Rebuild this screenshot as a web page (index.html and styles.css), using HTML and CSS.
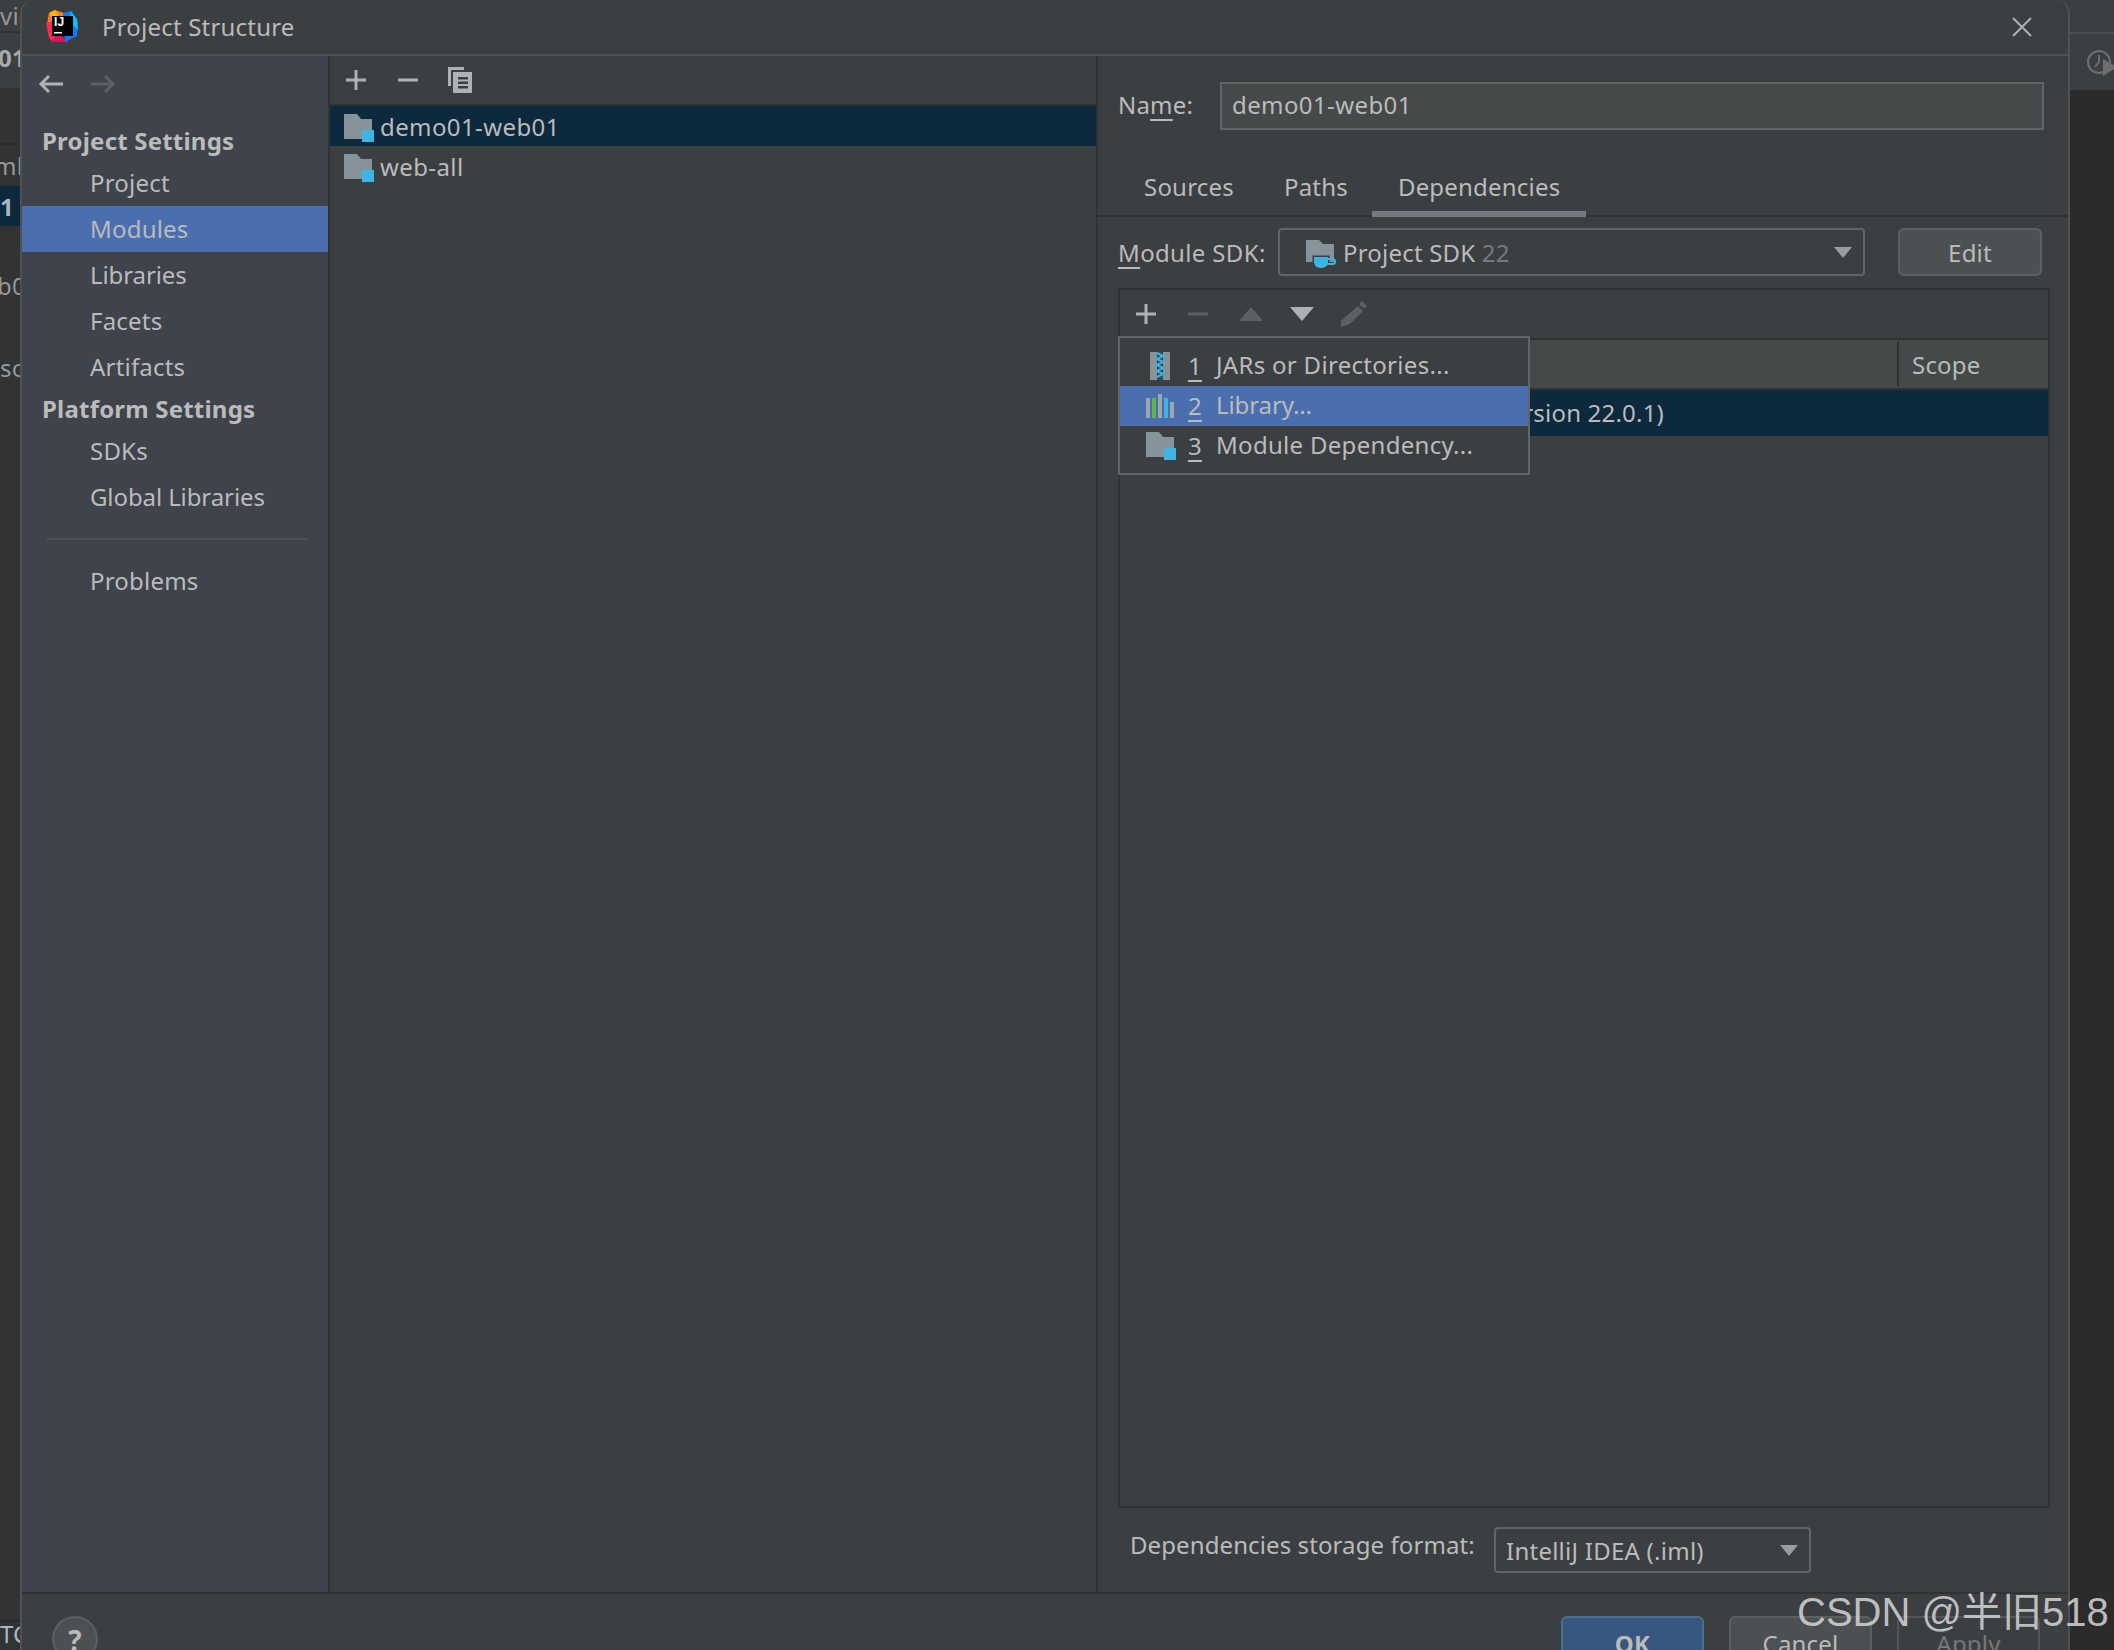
FILE: index.html

```html
<!DOCTYPE html>
<html lang="en">
<head>
  <meta charset="UTF-8">
  <title>Project Structure</title>
  <link rel="stylesheet" href="styles.css">
</head>
<body>

  <svg class="defs" width="0" height="0">
    <symbol id="module" viewBox="0 0 30 28">
      <path d="M0 0h13l4 5h11v20H0z" fill="#87939a"/>
      <rect x="18" y="16" width="12" height="12" fill="#3db4e4"/>
    </symbol>
    <symbol id="plus" viewBox="0 0 20 20">
      <path d="M8.500 0h3v8.500H20v3h-8.500V20h-3v-8.500H0v-3h8.500z"/>
    </symbol>
    <symbol id="minus" viewBox="0 0 20 20">
      <rect x="0" y="8.500" width="20" height="3"/>
    </symbol>
  </svg>

  <div class="desktop">
    <div class="ide-left">
      <div class="peek peek-a">vice</div>
      <div class="peek peek-b">01</div>
      <div class="peek peek-c"></div>
      <div class="peek peek-d">ml</div>
      <div class="peek peek-sel">1</div>
      <div class="peek peek-e">b0</div>
      <div class="peek peek-f">so</div>
      <div class="peek-fill"></div>
      <div class="peek peek-g">TC</div>
    </div>

    <div class="dialog">
      <div class="titlebar">
        <svg class="logo" viewBox="0 0 32 32" width="32" height="32">
          <polygon points="3,3 9,0 18,3 14,14 1,14" fill="#fe7a1b"/>
          <polygon points="3,3 9,0 13,5 6,8" fill="#fdb60d"/>
          <polygon points="0,13 7,11 10,24 7,32 3,28" fill="#fe2857"/>
          <polygon points="5,31 12,24 23,32 12,32" fill="#dd1265"/>
          <polygon points="17,3 26,1 32,12 31,26 19,32 18,12" fill="#087cfa"/>
          <polygon points="24,1 31,9 32,20 26,14" fill="#07c3f2"/>
          <rect x="6" y="6" width="21" height="20" fill="#000"/>
          <text class="logo-text" x="8" y="16">IJ</text>
          <rect x="8" y="22" width="8" height="1.500" fill="#fff"/>
        </svg>
        <span class="title">Project Structure</span>
        <svg class="close" viewBox="0 0 20 20" width="20" height="20">
          <path d="M1 1l18 18M19 1L1 19"/>
        </svg>
      </div>

      <div class="main">
        <nav class="sidebar">
          <div class="history">
            <svg class="arrow-icon" viewBox="0 0 26 20" width="26" height="20"><path d="M25 10H3M11 2l-8 8 8 8"/></svg>
            <svg class="arrow-icon off" viewBox="0 0 26 20" width="26" height="20"><path d="M1 10h22M15 2l8 8-8 8"/></svg>
          </div>
          <div class="heading">Project Settings</div>
          <div class="item">Project</div>
          <div class="item active">Modules</div>
          <div class="item tight">Libraries</div>
          <div class="item">Facets</div>
          <div class="item">Artifacts</div>
          <div class="heading">Platform Settings</div>
          <div class="item">SDKs</div>
          <div class="item tight">Global Libraries</div>
          <div class="side-sep"></div>
          <div class="item">Problems</div>
        </nav>

        <section class="modules">
          <div class="mod-toolbar">
            <svg class="tool" width="20" height="20"><use href="#plus"/></svg>
            <svg class="tool" width="20" height="20"><use href="#minus"/></svg>
            <svg class="tool" viewBox="0 0 24 26" width="24" height="26">
              <path d="M0 0h16v3H3v16H0z"/>
              <path fill-rule="evenodd" d="M5 5h19v21H5zM10 10v2.500h10V10zM10 14.500V17h10v-2.500zM10 19v2.500h10V19z"/>
            </svg>
          </div>
          <div class="mod-row selected">
            <svg class="mod-icon" width="30" height="28"><use href="#module"/></svg>
            <span>demo01-web01</span>
          </div>
          <div class="mod-row">
            <svg class="mod-icon" width="30" height="28"><use href="#module"/></svg>
            <span>web-all</span>
          </div>
        </section>

        <section class="detail">
          <div class="name-row">
            <label class="name-label">Na<u>m</u>e:</label>
            <div class="name-input">demo01-web01</div>
          </div>

          <div class="tabs">
            <div class="tab">Sources</div>
            <div class="tab paths">Paths</div>
            <div class="tab current">Dependencies</div>
          </div>

          <div class="sdk-row">
            <label class="sdk-label"><u>M</u>odule SDK:</label>
            <div class="combo sdk-combo">
              <svg class="sdk-icon" viewBox="0 0 30 30" width="30" height="30">
                <path d="M0 0h13l4 4h11v18H0z" fill="#87939a"/>
                <path d="M8 17h14v4c0 5-3 7-7 7s-7-2-7-7z" fill="#3db4e4" stroke="#3c3f41" stroke-width="3" paint-order="stroke"/>
                <path d="M22 19h4.500a2.500 2.500 0 010 5H21" fill="none" stroke="#3db4e4" stroke-width="2"/>
              </svg>
              <span>Project SDK <span class="muted">22</span></span>
              <i class="caret"></i>
            </div>
            <button class="btn edit-btn">Edit</button>
          </div>

          <div class="deps">
            <div class="deps-toolbar">
              <svg class="tool" width="20" height="20"><use href="#plus"/></svg>
              <svg class="tool off" width="20" height="20"><use href="#minus"/></svg>
              <svg class="tool off" viewBox="0 0 24 14" width="24" height="14"><path d="M12 0l12 14H0z"/></svg>
              <svg class="tool" viewBox="0 0 24 14" width="24" height="14"><path d="M0 0h24L12 14z"/></svg>
              <svg class="tool off" viewBox="0 0 26 26" width="26" height="26">
                <path d="M19 2l2-2 5 5-2 2a1.500 1.500 0 01-2 0l-3-3a1.500 1.500 0 010-2zM17 5l5 5-13 13-9 3v-6z"/>
              </svg>
            </div>
            <div class="deps-header">
              <div class="col-main"></div>
              <div class="col-scope">Scope</div>
            </div>
            <div class="deps-row">
              <div class="cell-jdk">22 (version 22.0.1)</div>
            </div>

            <div class="popup">
              <div class="pop-item">
                <svg class="pop-icon" viewBox="0 0 30 28" width="30" height="28">
                  <rect x="4" y="0" width="20" height="28" fill="#87939a"/>
                  <rect x="11" y="0" width="6" height="28" fill="#2f4a59"/>
                  <path d="M11 1l6 3-6 3 6 3-6 3 6 3-6 3 6 3-6 3" fill="none" stroke="#3db4e4" stroke-width="2"/>
                </svg>
                <u class="key">1</u>
                <span>JARs or Directories...</span>
              </div>
              <div class="pop-item on">
                <svg class="pop-icon" viewBox="0 0 30 28" width="30" height="28">
                  <rect x="0" y="6" width="4" height="20" fill="#9aa7b0"/>
                  <rect x="6" y="6" width="4" height="20" fill="#62b543"/>
                  <rect x="12" y="2" width="4" height="24" fill="#9aa7b0"/>
                  <rect x="18" y="6" width="4" height="20" fill="#3db4e4"/>
                  <rect x="24" y="10" width="4" height="16" fill="#9aa7b0"/>
                </svg>
                <u class="key">2</u>
                <span class="tight">Library...</span>
              </div>
              <div class="pop-item">
                <svg class="pop-icon" width="30" height="28"><use href="#module"/></svg>
                <u class="key">3</u>
                <span>Module Dependency...</span>
              </div>
            </div>
          </div>

          <div class="format-row">
            <label class="format-label">Dependencies storage format:</label>
            <div class="combo format-combo">
              <span>IntelliJ IDEA (.iml)</span>
              <i class="caret"></i>
            </div>
          </div>
        </section>
      </div>

      <div class="footer">
        <div class="help">?</div>
        <div class="actions">
          <button class="btn primary">OK</button>
          <button class="btn">Cancel</button>
          <button class="btn disabled">Apply</button>
        </div>
      </div>
    </div>

    <div class="ide-right">
      <div class="right-tab"></div>
      <div class="right-bar">
        <svg viewBox="0 0 30 30" width="30" height="30">
          <circle cx="12" cy="13" r="11" fill="none" stroke="#6e6e6e" stroke-width="2"/>
          <path d="M12 6v7l-4 5" fill="none" stroke="#6e6e6e" stroke-width="2"/>
          <path d="M16 10l14 8-14 9z" fill="#6e6e6e"/>
        </svg>
      </div>
    </div>
  </div>

  <div class="watermark">CSDN @半旧518</div>

</body>
</html>
```

FILE: styles.css

```css
* {
  box-sizing: border-box;
}
html, body {
  margin: 0;
  height: 100%;
}
body {
  position: relative;
  width: 2114px;
  height: 1650px;
  overflow: hidden;
  background: #2b2b2b;
  color: #bbbbbb;
  font-family: "Noto Sans", "Open Sans", sans-serif;
  font-size: 24px;
  letter-spacing: 0.2px;
}
.defs {
  position: absolute;
}
u {
  text-decoration-thickness: 2px;
  text-underline-offset: 5px;
}
svg {
  display: block;
  flex: none;
}
.tight {
  letter-spacing: -0.1px;
}
.desktop {
  display: flex;
  height: 1650px;
}

/* IDE window peeking out behind the dialog, wider than the gap so the
   dialog's rounded corners show it */
.ide-left {
  width: 34px;
  margin-right: -14px;
  flex: none;
  display: flex;
  flex-direction: column;
  background: #313335;
  overflow: hidden;
}
.peek {
  white-space: nowrap;
  display: flex;
  align-items: center;
  flex: none;
  color: #a9b7c6;
}
.peek-a { height: 33px; background: #3c3f41; border-bottom: 2px solid #323232; color: #999; }
.peek-b { height: 57px; background: #3c3f41; border-bottom: 2px solid #323232; padding-bottom: 6px; text-indent: -2px; color: #aaa; font-weight: 700; }
.peek-c { height: 55px; border-bottom: 2px solid #2b2b2b; }
.peek-d { height: 41px; color: #999; text-indent: -6px; }
.peek-sel { height: 40px; background: #0d293e; font-weight: 700; }
.peek-e { height: 118px; color: #999; text-indent: -3px; }
.peek-f { height: 46px; color: #999; }
.peek-fill { flex: 1; border-bottom: 2px solid #2b2b2b; }
.peek-g { height: 28px; align-items: flex-end; }
.ide-right {
  width: 58px;
  margin-left: -14px;
  flex: none;
  display: flex;
  flex-direction: column;
}
.right-tab {
  height: 34px;
  background: #3c3f41;
  border-bottom: 2px solid #4c4f51;
}
.right-bar {
  height: 56px;
  background: #3c3f41;
  padding: 15px 0 0 31px;
}

/* dialog */
.dialog {
  position: relative;
  width: 2050px;
  height: 1650px;
  flex: none;
  display: flex;
  flex-direction: column;
  background: #3c3f41;
  border: 2px solid #4f5254;
  border-width: 0 2px;
  border-radius: 14px 14px 0 0;
  overflow: hidden;
}
.titlebar {
  height: 56px;
  flex: none;
  display: flex;
  align-items: center;
  padding-left: 24px;
  border-bottom: 2px solid #4f5254;
}
.logo {
  margin-right: 24px;
  margin-top: -2px;
}
.logo-text {
  font: 700 12px "Liberation Sans", sans-serif;
  fill: #fff;
}
.title {
  flex: 1;
  line-height: 54px;
}
.close {
  margin-right: 36px;
  stroke: #afb1b3;
  stroke-width: 2;
  fill: none;
}
.main {
  flex: 1;
  min-height: 0;
  display: flex;
  border-bottom: 2px solid #323232;
}

/* left settings tree */
.sidebar {
  width: 308px;
  flex: none;
  background: #3f434c;
  border-right: 2px solid #323232;
}
.history {
  height: 66px;
  display: flex;
  gap: 26px;
  padding: 18px 0 0 16px;
}
.arrow-icon {
  fill: none;
  stroke: #afb1b3;
  stroke-width: 3;
}
.arrow-icon.off {
  stroke: #5d5f61;
}
.heading {
  height: 38px;
  line-height: 38px;
  padding-left: 20px;
  font-weight: 700;
}
.item {
  height: 46px;
  line-height: 46px;
  padding-left: 68px;
}
.item.active {
  background: #4b6eaf;
}
.side-sep {
  height: 38px;
  margin: 0 20px 0 24px;
  background: linear-gradient(#4b4e55, #4b4e55) center / 100% 2px no-repeat;
}

/* module list */
.modules {
  width: 768px;
  flex: none;
  border-right: 2px solid #323232;
}
.mod-toolbar {
  height: 50px;
  display: flex;
  align-items: center;
  padding-left: 16px;
  border-bottom: 2px solid #323232;
}
.tool {
  fill: #afb1b3;
}
.tool.off {
  fill: #5d5f61;
}
.mod-toolbar .tool:nth-child(1) { margin: 0 32px 0 0; }
.mod-toolbar .tool:nth-child(2) { margin: 0 30px 0 0; }
.mod-row {
  height: 40px;
  display: flex;
  align-items: center;
  padding-left: 14px;
  gap: 6px;
  letter-spacing: 0.4px;
}
.mod-icon {
  margin-top: 4px;
}
.mod-row.selected {
  background: #0d293e;
}

/* right side */
.detail {
  flex: 1;
  min-width: 0;
  display: flex;
  flex-direction: column;
}
.name-row {
  height: 48px;
  flex: none;
  margin: 26px 24px 0 20px;
  display: flex;
  align-items: center;
}
.name-label {
  width: 102px;
  margin-top: -4px;
}
.name-input {
  flex: 1;
  height: 48px;
  line-height: 42px;
  padding-left: 10px;
  letter-spacing: 0.4px;
  background: #45494a;
  border: 2px solid #646464;
}
.tabs {
  height: 87px;
  flex: none;
  display: flex;
  align-items: stretch;
  padding-left: 20px;
  padding-top: 30px;
  border-bottom: 2px solid #323232;
}
.tab {
  padding: 0 26px;
  line-height: 54px;
}
.tab.paths {
  margin-left: -2px;
}
.tab.current {
  border-bottom: 6px solid #747a80;
  margin-bottom: -2px;
  margin-left: -2px;
}
.sdk-row {
  height: 48px;
  flex: none;
  margin: 11px 24px 0 20px;
  display: flex;
  align-items: center;
}
.sdk-label {
  width: 160px;
  letter-spacing: 0.35px;
}
.combo {
  height: 48px;
  flex: none;
  display: flex;
  align-items: center;
  border: 2px solid #646464;
  border-radius: 4px;
}
.sdk-combo {
  width: 587px;
  padding-left: 26px;
  gap: 7px;
}
.sdk-icon {
  margin-top: 6px;
}
.muted {
  color: #787878;
}
.caret {
  flex: none;
  margin-left: auto;
  margin-right: 11px;
  width: 0;
  height: 0;
  border: 9px solid transparent;
  border-top: 11px solid #9a9d9f;
  border-bottom: 0;
}
.btn {
  height: 46px;
  padding: 0;
  font: inherit;
  letter-spacing: inherit;
  color: #bbbbbb;
  background: #4c5052;
  border: 2px solid #5e6060;
  border-radius: 6px;
}
.edit-btn {
  width: 144px;
  height: 48px;
  margin-left: 33px;
}

/* dependency table */
.deps {
  position: relative;
  height: 1220px;
  flex: none;
  margin: 12px 18px 0 20px;
  border: 2px solid #323232;
}
.deps-toolbar {
  height: 50px;
  display: flex;
  align-items: center;
  padding-left: 16px;
  border-bottom: 2px solid #323232;
}
.deps-toolbar .tool {
  margin-right: 31px;
}
.deps-toolbar .tool:nth-child(1) {
  margin-right: 32px;
}
.deps-toolbar .tool:nth-child(3),
.deps-toolbar .tool:nth-child(4) {
  margin-right: 27px;
}
.deps-header {
  height: 50px;
  display: flex;
  background: #45494a;
  border-bottom: 2px solid #323232;
}
.col-main {
  flex: 1;
}
.col-scope {
  width: 151px;
  margin: 2px 0;
  padding-left: 13px;
  line-height: 46px;
  border-left: 2px solid #323232;
}
.deps-row {
  height: 46px;
  background: #0d293e;
}
.cell-jdk {
  width: 544px;
  line-height: 46px;
  text-align: right;
  white-space: nowrap;
}

/* add-dependency menu */
.popup {
  position: absolute;
  left: -2px;
  top: 46px;
  width: 412px;
  height: 139px;
  padding: 8px 0;
  background: #3c3f41;
  border: 2px solid #646464;
}
.pop-item {
  height: 40px;
  display: flex;
  align-items: center;
  padding-left: 26px;
  letter-spacing: 0.3px;
}
.pop-item span {
  margin-top: -4px;
}
.pop-item.on {
  background: #4b6eaf;
}
.pop-icon {
  margin-right: 12px;
}
.key {
  width: 14px;
  margin-right: 14px;
  margin-top: -2px;
  text-decoration-skip-ink: none;
}

.format-row {
  flex: none;
  display: flex;
  align-items: center;
  margin: 19px 0 0 32px;
}
.format-label {
  width: 364px;
  margin-top: -12px;
  letter-spacing: 0.1px;
}
.format-combo {
  width: 317px;
  height: 46px;
  padding-left: 10px;
}
.format-combo span {
  letter-spacing: 0.25px;
}

/* bottom buttons */
.footer {
  height: 56px;
  flex: none;
  display: flex;
  padding: 22px 28px 0 30px;
  justify-content: space-between;
}
.help {
  width: 46px;
  height: 46px;
  flex: none;
  border-radius: 50%;
  text-align: center;
  line-height: 44px;
  font-size: 28px;
  font-weight: 700;
  background: #4c5052;
  border: 2px solid #5e6060;
}
.actions {
  display: flex;
  gap: 25px;
}
.actions .btn {
  width: 143px;
  height: 60px;
  padding-bottom: 6px;
}
.btn.primary {
  background: #365880;
  border-color: #4c708c;
  font-weight: 700;
}
.btn.disabled {
  background: transparent;
  border-color: #535556;
  color: #777777;
}

.watermark {
  position: absolute;
  left: 1797px;
  top: 1588px;
  font: 40px/48px "Liberation Sans", "Noto Sans CJK SC", sans-serif;
  letter-spacing: 0;
  color: rgba(214, 214, 214, 0.85);
  white-space: nowrap;
}
```
